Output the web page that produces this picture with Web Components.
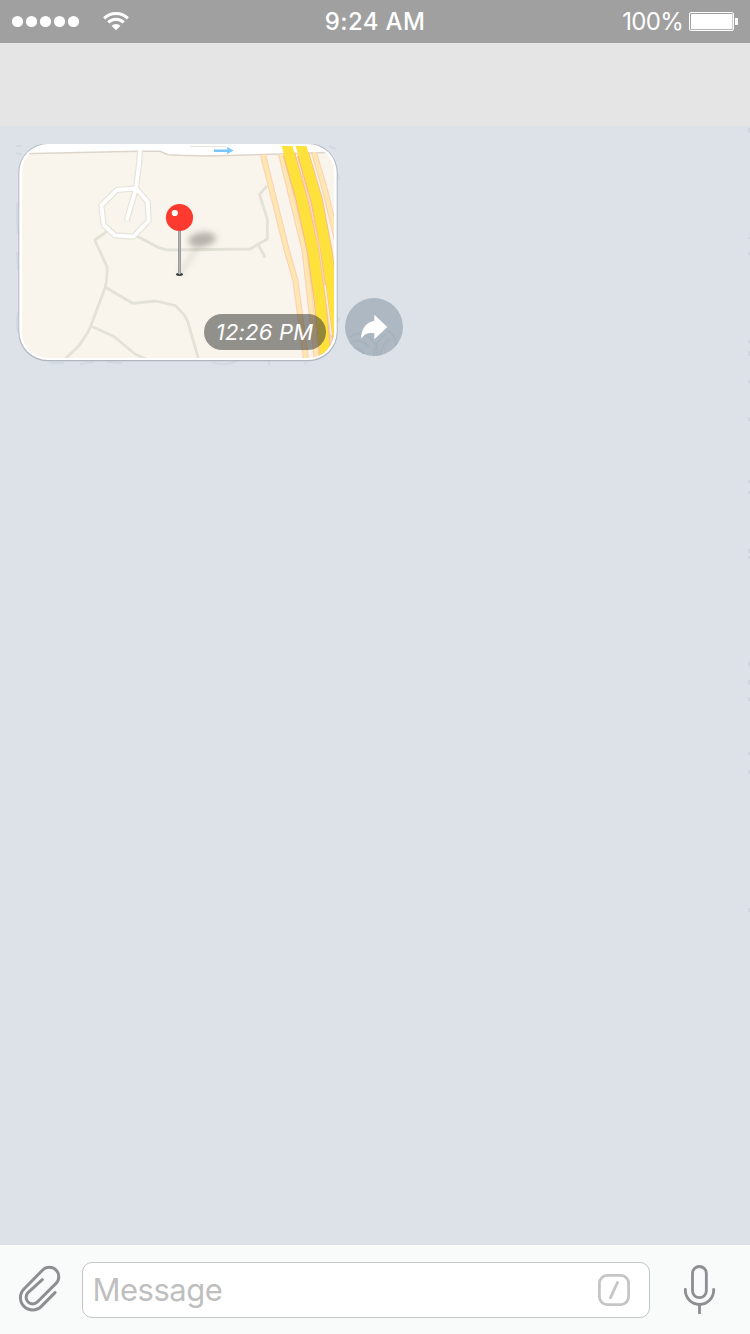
<!DOCTYPE html>
<html lang="en">
<head>
<meta charset="utf-8">
<title>Chat</title>
<style>
html,body{margin:0;height:100%}
body{font-family:Inter,"Liberation Sans",sans-serif;overflow:hidden}
</style>
</head>
<body>
<chat-app></chat-app>
<script>
function define(name, html) {
  const t = document.createElement('template');
  t.innerHTML = html;
  customElements.define(name, class extends HTMLElement {
    constructor() {
      super();
      this.attachShadow({ mode: 'open' }).appendChild(t.content.cloneNode(true));
    }
  });
}

define('status-bar', `
<style>
:host{display:flex;justify-content:space-between;align-items:center;height:43px;background:#a0a0a0;color:#fff;font-size:24px;line-height:43px;padding:0 12px}
svg{display:block}
.side{flex:1;display:flex;align-items:center}
.right{justify-content:flex-end;gap:6px;letter-spacing:-.7px}
.time{font-weight:500;font-size:24px;letter-spacing:.35px;white-space:nowrap}
</style>
<div class="side"><svg width="120" height="43" viewBox="12 0 120 43" fill="#fff">
<circle cx="17.5" cy="21.5" r="5.6"/><circle cx="31.5" cy="21.5" r="5.6"/><circle cx="45.5" cy="21.5" r="5.6"/><circle cx="59.5" cy="21.5" r="5.6"/><circle cx="73.5" cy="21.5" r="5.6"/>
<g fill="none" stroke="#fff" stroke-width="3.2"><path d="M104.2 18.4A16.6 16.6 0 0 1 127.8 18.4"/><path d="M108.3 22.5A10.8 10.8 0 0 1 123.7 22.5"/></g>
<path d="M116 30.3L111.5 25.8A6.4 6.4 0 0 1 120.5 25.8Z"/></svg></div>
<div class="time"><slot name="time"></slot></div>
<div class="side right"><span><slot name="battery"></slot></span>
<svg width="49" height="43" viewBox="689 0 49 43"><rect x="689.5" y="12.5" width="44" height="18" rx="1.5" fill="none" stroke="#fff"/><rect x="691" y="14" width="41.5" height="15.2" fill="#fff"/><rect x="735" y="18" width="3" height="7" fill="#fff"/></svg></div>`);

define('nav-bar', `<style>:host{display:block;height:83px;background:#e5e5e5}</style>`);

define('time-badge', `
<style>:host{box-sizing:border-box;display:flex;align-items:center;justify-content:center;width:122px;height:36px;padding:0 1px 1px 0;border-radius:18px;background:rgba(60,60,55,.54);color:#fff;font-size:22px;font-style:italic;letter-spacing:.2px;white-space:nowrap}</style><slot></slot>`);

define('location-card', `
<style>
:host{display:block;position:relative;width:324px;height:226px}
svg{display:block}
::slotted(time-badge){position:absolute;left:188px;top:172px}
</style>
<svg width="324" height="226" viewBox="16 142 324 226">
<defs><clipPath id="map"><rect x="22" y="146" width="312" height="212" rx="26"/></clipPath>
<filter id="soft" x="-50%" y="-50%" width="200%" height="200%"><feGaussianBlur stdDeviation="3"/></filter></defs>
<g fill="none" stroke="#d1d7df" stroke-width="1.6"><path d="M16 146h6M16 153l6 2M17.5 203q-1 16 .5 31M17 252l1 18M18 312q-2 14 0 20M49 363h15M80 364l14-2M107 362l15 1M212 362q10 5 25-1M269 361v4M306 362l-1 3M329 146l7 3M337 172l2 8M337 322l3-4"/></g>
<rect x="18.4" y="143.400" width="319.200" height="217.800" rx="29" fill="#aeb5bd"/>
<rect x="17" y="141" width="322" height="3" fill="#dde2e9"/>
<rect x="19.300" y="144" width="317.400" height="216" rx="28.500" fill="#fff"/>
<g clip-path="url(#map)" fill="none" stroke-linejoin="round">
<rect x="22" y="146" width="312" height="212" fill="#f9f5ed"/>
<path d="M20 144H340V152L280 154L206.700 156L180 155.300L168 154.700L160 151.300L138 151.300L20 153.800Z" fill="#fff" stroke="#ddd5c9" stroke-width="1.500"/>
<path d="M190 146.500H226" stroke="#eae3dc" stroke-width="1"/>
<g stroke="#e4e2d6" stroke-width="2.800">
<path d="M107 231.500L94.700 240L107 266.700Q107.500 277 105.300 287.300L90.700 326L87.700 332.700L78.700 346L65 359"/>
<path d="M105 287L132.700 303.300L156 301L175.500 305.700L183.500 314L187.500 321L198.500 359"/>
<path d="M90.700 326L113.300 336L135 354L146 359"/>
<path d="M136.700 236L158 247.300L167 250L250 249L267.300 239V219L259.500 194.500L267 186"/><path d="M258.500 245L265 257.500"/></g>
<path d="M116.700 190L136 188.300L147.700 201.700L148.700 220.700L133.300 236.700L115 235.300L103.700 225L101.300 205.300ZM140 150L139.300 162L136 188.300L126.700 221" stroke="#e6e3da" stroke-width="6.200"/>
<path d="M116.700 190L136 188.300L147.700 201.700L148.700 220.700L133.300 236.700L115 235.300L103.700 225L101.300 205.300ZM140 148L139.300 162L136 188.300L126.700 220.500" stroke="#fff" stroke-width="3.800"/>
<g stroke="#fbd3b9" stroke-width="6.200"><path d="M263 155L286.700 250L295.300 280L306 359"/><path d="M281 154L304.500 250L316.700 359"/><path d="M314 152.500L325 190L337 240"/></g>
<g stroke="#ffe8b0" stroke-width="3.800"><path d="M263 155L286.700 250L295.300 280L306 359"/><path d="M281 154L304.500 250L316.700 359"/><path d="M314 152.500L325 190L337 240"/></g>
<g stroke="#f8bd8b" stroke-width="12.800"><path d="M289 154L302 200L313 250L320 300L326 359"/><path d="M303 154L316.500 200L326 250L333 300L340 359"/></g>
<path d="M302 175L309.500 202L319.500 250L326.500 300L332 345" stroke="#f7d3b8" stroke-width="1.400"/>
<g stroke="#ffe13b" stroke-width="10.500"><path d="M286.500 144L302 200L313 250L320 300L325.500 359"/><path d="M300.500 144L316.700 200L326 250L333.500 300L341 359"/></g>
<path d="M325 285L331.500 335" stroke="#f8eee2" stroke-width="1.300"/>
<path d="M214 150.700H229" stroke="#78c6fa" stroke-width="2.400"/><path d="M226.500 146.800L233.700 150.600L226.500 154.200L228 150.600Z" fill="#78c6fa"/>
<g filter="url(#soft)"><ellipse cx="202" cy="239.500" rx="14" ry="7" transform="rotate(-8 202 239.500)" fill="#827e76" opacity=".56"/><path d="M180 274L198 246" stroke="#8a877f" stroke-width="4" opacity=".25"/></g>
</g>
<ellipse cx="179.500" cy="274.300" rx="3.500" ry="1.600" fill="#34363a"/>
<path d="M179.500 230V274" stroke="#9a9b9f" stroke-width="3"/><path d="M179.500 230V274.500" stroke="#b2b4b8" stroke-width="1"/>
<circle cx="179.500" cy="217.500" r="13.600" fill="#fc3a30"/><circle cx="174.800" cy="213" r="3.100" fill="#fff"/>
</svg><slot></slot>`);

define('share-button', `
<style>:host{display:block;width:58px;height:58px}svg{display:block}</style>
<svg width="58" height="58" viewBox="345 298 58 58"><defs><clipPath id="c"><circle cx="374" cy="327" r="29"/></clipPath></defs>
<circle cx="374" cy="327" r="29" fill="#adb8c2"/>
<g clip-path="url(#c)" fill="none" stroke="#a6b2bc" stroke-width="1.800"><path d="M350 337Q361 329 371 339T376 358M349 344Q359 336 369 347M350 350Q358 345 364 354M374 358Q374 341 386 334M380 358Q381 344 390 339M387 330Q397 335 396 346"/></g>
<path d="M374.300 314.700L387.300 327L374.300 339.300V333.200C368 332.500 364.500 334 361.200 338.700C361 330 365.500 321.800 374.300 321Z" fill="#fff"/></svg>`);

define('message-list', `
<style>
:host{flex:1;display:flex;position:relative;background:#dde2e9}
.row{display:flex;align-items:flex-start;padding:16px 0 0 16px}
::slotted(share-button){margin:156px 0 0 5px}
.edge{position:absolute;right:0;top:0}
</style>
<div class="row"><slot></slot></div>
<svg class="edge" width="3" height="1119" viewBox="747 126 3 1119" stroke="#cdd4dd" stroke-width="1.500"><path d="M749 128v5M749 237v2M749 252v3M749 340v3M749 351v5M749 380v3M749 417v4M749 480v3M749 491v3M749 549v4M749 556v3M749 662v4M749 680v5M749 697v4M749 752v3M749 770v4M749 908v4"/></svg>`);

define('message-field', `
<style>
:host{box-sizing:border-box;display:flex;align-items:center;justify-content:space-between;width:568px;height:56px;border:1px solid #c3c4c8;border-radius:10px;background:#fff;padding:0 19px 0 9.500px;color:#bfbfc0;font-size:31px;letter-spacing:-.5px}
span{padding-bottom:1px}
svg{display:block}
</style><span><slot></slot></span>
<svg width="32" height="32" viewBox="598 1274 32 32" fill="none" stroke="#c5c5c6"><rect x="599.400" y="1275.400" width="29.200" height="29.200" rx="7.800" stroke-width="2.800"/><path d="M617.500 1282.500L610.500 1297.700" stroke-width="2.800" stroke-linecap="round"/></svg>`);

define('input-bar', `
<style>
:host{box-sizing:border-box;height:89px;display:flex;background:#f9fbfb;align-items:flex-start}
svg{display:block;flex:none}
::slotted(message-field){margin-top:17px}
</style>
<svg width="82" height="89" viewBox="0 0 246 267" fill="none" stroke="#8e8e93" stroke-width="9" stroke-linecap="round"><path d="M165 143L124 184A36 36 0 0 1 72 132L128 75A28 28 0 0 1 168 115L112 171A19 19 0 0 1 84 143L127 104"/></svg>
<slot></slot>
<svg width="100" height="89" viewBox="240 0 300 267" fill="none" stroke="#8e8e93" stroke-width="8.500" stroke-linecap="round"><rect x="367.500" y="64.500" width="41.500" height="93.500" rx="20.700"/><path d="M346 133V136A42.500 42.500 0 0 0 431 136V133"/><path d="M388.500 178V207" stroke-linecap="butt"/></svg>`);

define('chat-app', `
<style>:host{display:flex;flex-direction:column;width:750px;height:1334px}</style>
<status-bar><span slot="time">9:24 AM</span><span slot="battery">100%</span></status-bar>
<nav-bar></nav-bar>
<message-list><location-card><time-badge>12:26 PM</time-badge></location-card><share-button></share-button></message-list>
<input-bar><message-field>Message</message-field></input-bar>`);
</script>
</body>
</html>
